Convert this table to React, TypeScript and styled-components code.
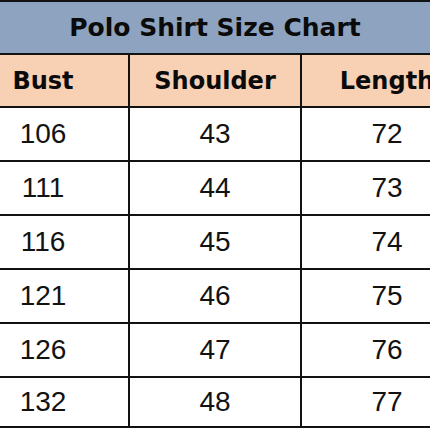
import React from 'react';
import styled, {createGlobalStyle} from 'styled-components';

const GlobalStyle = createGlobalStyle`
  html, body {
    margin: 0;
    padding: 0;
    background: #ffffff;
    overflow: hidden;
  }
`;

const rows = [
    {bust: 106, shoulder: 43, length: 72},
    {bust: 111, shoulder: 44, length: 73},
    {bust: 116, shoulder: 45, length: 74},
    {bust: 121, shoulder: 46, length: 75},
    {bust: 126, shoulder: 47, length: 76},
    {bust: 132, shoulder: 48, length: 77}
];

const headers = ['Bust', 'Shoulder', 'Length'];

const App = (): JSX.Element => {
    return (
        <>
            <GlobalStyle/>
            <Page>
                <Chart>
                    <Title>Polo Shirt Size Chart</Title>
                    {headers.map((h) => (
                        <HeadCell key={h}>{h}</HeadCell>
                    ))}
                    {rows.map((r) => (
                        <React.Fragment key={r.bust}>
                            <Cell>{r.bust}</Cell>
                            <Cell>{r.shoulder}</Cell>
                            <Cell>{r.length}</Cell>
                        </React.Fragment>
                    ))}
                </Chart>
            </Page>
        </>
    );
};

const Page = styled.div`
  width: 430px;
  height: 430px;
  overflow: hidden;
  background: #ffffff;
`;

// table is wider than the shot: first and last columns are cut at the edges
const Chart = styled.div`
  display: grid;
  grid-template-columns: repeat(3, 170px);
  grid-template-rows: 51px 51px repeat(5, 52px) 48px;
  gap: 2px;
  width: max-content;
  margin-left: -44px;
  border: 2px solid #121212;
  background: #121212;
`;

const Title = styled.div`
  grid-column: 1 / -1;
  display: flex;
  align-items: center;
  justify-content: center;
  background: #8ea3bf;
  color: #0b0b0b;
  font-family: "DejaVu Sans", Verdana, sans-serif;
  font-weight: bold;
  font-size: 25px;
`;

const HeadCell = styled.div`
  display: flex;
  align-items: center;
  justify-content: center;
  background: #f8d0b4;
  color: #0b0b0b;
  font-family: "DejaVu Sans", Verdana, sans-serif;
  font-weight: bold;
  font-size: 24px;
`;

const Cell = styled.div`
  display: flex;
  align-items: center;
  justify-content: center;
  background: #ffffff;
  color: #121212;
  font-family: "Liberation Sans", Arial, sans-serif;
  font-size: 28px;
`;

export default App;
